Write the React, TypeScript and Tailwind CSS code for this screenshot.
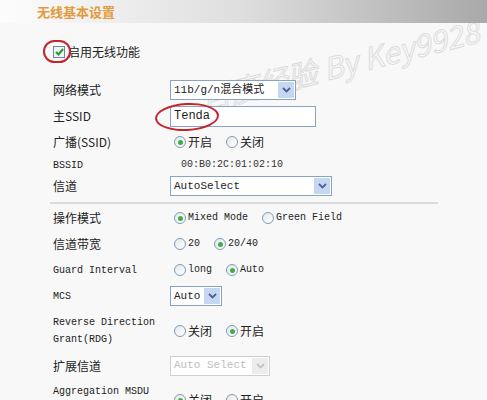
import React from "react";

const cn = "font-['SimSun','Noto_Sans_CJK_SC',sans-serif]";
const mono = "font-['Liberation_Mono','Noto_Sans_CJK_SC',monospace]";

const Arrow = ({ off }: { off?: boolean }) => (
  <div className={"w-[16px] h-[16px] flex items-center justify-center " + (off ? "bg-[#ececec]" : "bg-[#c6d7f1]")}>
    <svg width="9" height="6" viewBox="0 0 9 6">
      <path d="M1 1 L4.5 4.5 L8 1" fill="none" stroke={off ? "#c4c4c4" : "#4a6592"} strokeWidth="1.8" />
    </svg>
  </div>
);

const Select = ({ text, w, off }: { text: string; w: string; off?: boolean }) => (
  <div className={"h-[20px] flex items-center justify-between pl-[3px] pr-[1px] border bg-white " + w + (off ? " border-[#cfcfcf] text-[#bdbdbd]" : " border-[#8aa3bf] text-[#222]")}>
    <span className={mono + " text-[11px]"}>{text}</span>
    <Arrow off={off} />
  </div>
);

const Radio = ({ on, label, en }: { on?: boolean; label: string; en?: boolean }) => (
  <div className="flex items-center gap-[2px]">
    <div className="w-[12px] h-[12px] rounded-full border border-[#7f9bb6] bg-gradient-to-br from-[#e4e8ec] to-white flex items-center justify-center">
      {on && <div className="w-[5px] h-[5px] rounded-full bg-[#3fae45]" />}
    </div>
    <span className={(en ? mono + " text-[10px]" : cn + " text-[12px]") + " text-[#222]"}>{label}</span>
  </div>
);

const Row = ({ label, h, en, children }: { label: React.ReactNode; h: string; en?: boolean; children?: React.ReactNode }) => (
  <div className={"relative grid grid-cols-[117px_1fr] items-center pl-[53px] " + h}>
    <div className={(en ? mono + " text-[10px] leading-[17px]" : cn + " text-[12px] leading-[16px]") + " text-[#222]"}>{label}</div>
    <div className="leading-none">{children}</div>
  </div>
);

export default function App() {
  return (
    <div className="relative w-[487px] h-[400px] overflow-hidden bg-[#f8f8f8]">
      {/* watermark, behind the form */}
      <div className={"absolute left-[196px] top-[42px] -rotate-[14deg] italic text-[30px] whitespace-nowrap text-transparent [-webkit-text-stroke:1px_#dddddd] " + cn}>
        百度经验 By Key9928
      </div>

      <div className={"relative h-[23px] flex items-center pl-[37px] bg-gradient-to-r from-[#fcfcfc] via-[#dedede] to-[#a9a9a9] text-[#e29a3c] text-[13px] font-bold " + cn}>
        无线基本设置
      </div>

      <div className="relative h-[54px] flex items-center pl-[53px] pt-[3px] gap-[3px]">
        <div className="w-[12px] h-[12px] border border-[#6f879f] bg-[#eef2f4] flex items-center justify-center">
          <svg width="9" height="8" viewBox="0 0 9 8">
            <path d="M1 4 L3.5 6.5 L8 1" fill="none" stroke="#2e9a2e" strokeWidth="2" />
          </svg>
        </div>
        <span className={cn + " text-[12px] text-[#222]"}>启用无线功能</span>
      </div>

      <Row label="网络模式" h="h-[26px]">
        <Select text="11b/g/n混合模式" w="w-[126px]" />
      </Row>
      <Row label="主SSID" h="h-[26px]">
        <div className={"w-[146px] h-[21px] border border-[#8aa3bf] bg-white flex items-center pl-[3px] text-[12px] text-[#222] " + mono}>Tenda</div>
      </Row>
      <Row label="广播(SSID)" h="h-[26px]">
        <div className="flex gap-[14px] pl-[4px]"><Radio on label="开启" /><Radio label="关闭" /></div>
      </Row>
      <Row label={<span className={mono + " text-[10px]"}>BSSID</span>} h="h-[16px]">
        <span className={mono + " block text-[10px] leading-[14px] text-[#333] pl-[11px]"}>00:B0:2C:01:02:10</span>
      </Row>
      <Row label="信道" h="h-[30px]">
        <Select text="AutoSelect" w="w-[162px]" />
      </Row>

      <div className="relative ml-[50px] w-[388px] h-[2px] bg-[#dcdcdc] my-[1px]" />

      <Row label="操作模式" h="h-[26px]">
        <div className="flex gap-[14px] pl-[4px]"><Radio on en label="Mixed Mode" /><Radio en label="Green Field" /></div>
      </Row>
      <Row label="信道带宽" h="h-[26px]">
        <div className="flex gap-[14px] pl-[4px]"><Radio en label="20" /><Radio on en label="20/40" /></div>
      </Row>
      <Row label="Guard Interval" en h="h-[26px]">
        <div className="flex gap-[14px] pl-[4px]"><Radio en label="long" /><Radio on en label="Auto" /></div>
      </Row>
      <Row label="MCS" en h="h-[26px]">
        <Select text="Auto" w="w-[52px]" />
      </Row>
      <Row label={<>Reverse Direction<br />Grant(RDG)</>} en h="h-[44px]">
        <div className="flex gap-[14px] pl-[4px]"><Radio label="关闭" /><Radio on label="开启" /></div>
      </Row>
      <Row label="扩展信道" h="h-[25px]">
        <Select text="Auto Select" w="w-[100px]" off />
      </Row>
      <Row label={<>Aggregation MSDU<br />(A-MSDU)</>} en h="h-[44px]">
        <div className="flex gap-[14px] pl-[4px]"><Radio on label="关闭" /><Radio label="开启" /></div>
      </Row>

      {/* red hand-drawn marks */}
      <div className="absolute left-[43px] top-[40px] w-[28px] h-[23px] rounded-full border-2 border-[#c0262b]" />
      <div className="absolute left-[155px] top-[103px] w-[64px] h-[28px] rounded-[50%] border-2 border-[#c0262b] -rotate-3" />
    </div>
  );
}
